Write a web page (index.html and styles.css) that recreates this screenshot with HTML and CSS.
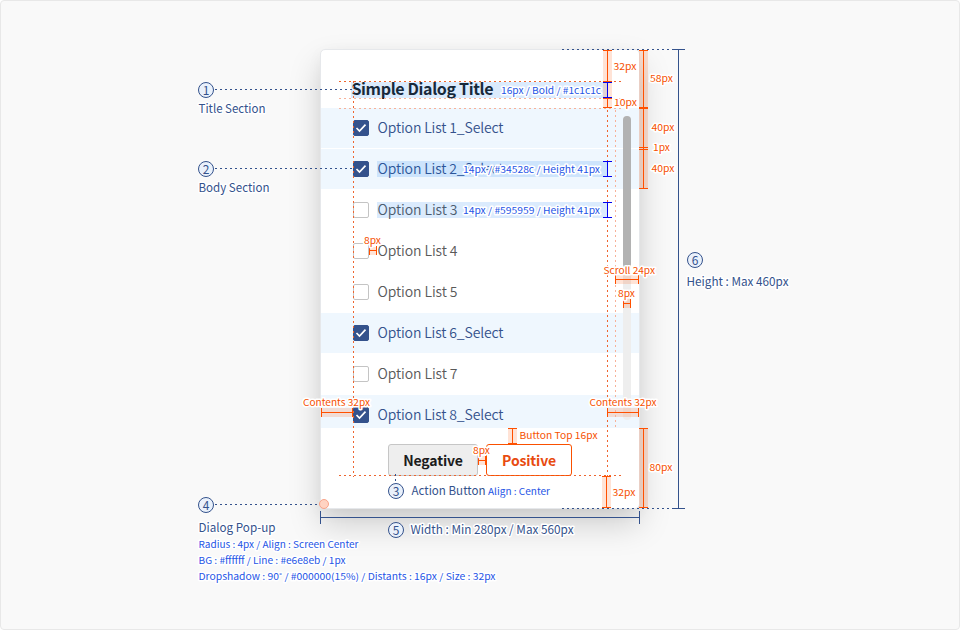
FILE: index.html
```html
<!DOCTYPE html>
<html lang="en">
<head>
<meta charset="utf-8">
<title>Simple Dialog</title>
<link rel="stylesheet" href="styles.css">
</head>
<body>
<main class="board">
  <section class="dialog">
    <h1 class="dialog-title"><svg width="260" height="24"><text x="0.500" y="17" textLength="142">Simple Dialog Title</text></svg></h1>
    <div class="dialog-body">
      <ul class="options">
        <li class="option selected"><i class="check"><svg viewBox="0 0 16 16"><path d="M3.5 8l3 3 6-6.300"/></svg></i><svg class="label"><text x="0.500" y="17" textLength="126">Option List 1_Select</text></svg></li>
        <li class="option selected"><i class="check"><svg viewBox="0 0 16 16"><path d="M3.5 8l3 3 6-6.300"/></svg></i><svg class="label"><text x="0.500" y="17" textLength="126">Option List 2_Select</text></svg></li>
        <li class="option"><i class="check"></i><svg class="label"><text x="0.500" y="17" textLength="80">Option List 3</text></svg></li>
        <li class="option"><i class="check"></i><svg class="label"><text x="0.500" y="17" textLength="80">Option List 4</text></svg></li>
        <li class="option"><i class="check"></i><svg class="label"><text x="0.500" y="17" textLength="80">Option List 5</text></svg></li>
        <li class="option selected"><i class="check"><svg viewBox="0 0 16 16"><path d="M3.5 8l3 3 6-6.300"/></svg></i><svg class="label"><text x="0.500" y="17" textLength="126">Option List 6_Select</text></svg></li>
        <li class="option"><i class="check"></i><svg class="label"><text x="0.500" y="17" textLength="80">Option List 7</text></svg></li>
        <li class="option selected"><i class="check"><svg viewBox="0 0 16 16"><path d="M3.5 8l3 3 6-6.300"/></svg></i><svg class="label"><text x="0.500" y="17" textLength="126">Option List 8_Select</text></svg></li>
      </ul>
      <div class="track"><div class="thumb"></div></div>
    </div>
    <div class="actions">
      <button class="btn negative">Negative</button>
      <button class="btn positive">Positive</button>
    </div>
  </section>

  <svg class="notes" width="960" height="630" viewBox="0 0 960 630">
    <g class="mark">
      <rect x="351" y="82" width="256" height="16"/>
      <rect x="377" y="161" width="230" height="16"/>
      <rect x="377" y="202" width="230" height="16"/>
    </g>
    <g class="tint">
      <rect x="603" y="50" width="9" height="58"/>
      <rect x="639" y="50" width="9" height="139"/>
      <rect x="369" y="247" width="8" height="8"/>
      <rect x="615" y="275" width="24" height="9"/>
      <rect x="623" y="299" width="8" height="9"/>
      <rect x="321" y="408" width="32" height="9"/>
      <rect x="607" y="408" width="32" height="9"/>
      <rect x="508" y="428" width="9" height="16"/>
      <rect x="639" y="428" width="9" height="80"/>
      <rect x="602" y="476" width="9" height="32"/>
      <rect x="478" y="456" width="8" height="9"/>
    </g>
    <g class="guide">
      <path d="M339 81.500H621M353.500 81V477M607.500 110V477M339 475.500H621"/>
      <path class="faint" d="M339 98.500H621M339 108.500H621M615.500 110V428"/>
    </g>
    <g class="lead">
      <path d="M215 89.500H352M215 168.500H352M215 504.500H320M562 49.500H674M562 508.500H674M395.500 474V482"/>
    </g>
    <g class="measure">
      <path d="M603 50.500h9M607.500 50V82M607.500 98V108M603 81.500h9M603 98.500h9M603 107.500h9"/>
      <path d="M639 50.500h9M643.500 50V189M639 107.500h9M639 108.500h9M639 147.500h9M639 149.500h9M639 188.500h9"/>
      <path d="M369.500 246v9M376.500 246v9M369 250.500h8"/>
      <path d="M615.500 275v9M638.500 275v9M615 279.500h24"/>
      <path d="M623.500 299v9M630.500 299v9M623 303.500h8"/>
      <path d="M321.500 408v9M352.500 408v9M321 412.500h32"/>
      <path d="M607.500 408v9M638.500 408v9M607 412.500h32"/>
      <path d="M508 428.500h9M512.500 428v16M508 443.500h9"/>
      <path d="M639 428.500h9M643.500 428v80M639 507.500h9"/>
      <path d="M602 476.500h9M606.500 476v32M602 507.500h9"/>
      <path d="M478.500 456v9M485.500 456v9M478 460.500h8"/>
    </g>
    <g class="blue-measure">
      <path d="M603 82.500h9M607.500 82v16M603 97.500h9M603 161.500h9M607.500 161v16M603 176.500h9M603 202.500h9M607.500 202v16M603 217.500h9"/>
    </g>
    <g class="span"><path d="M672 49.500h13M678.500 49V509M672 508.500h13M320.500 511v13M639.500 511v13M320 517.500h320"/></g>
    <circle class="corner" cx="324" cy="504" r="4.500"/>

    <g class="bullet">
      <circle cx="206" cy="90" r="7.500"/><text x="206" y="94.500">1</text>
      <circle cx="206" cy="169" r="7.500"/><text x="206" y="173.500">2</text>
      <circle cx="396" cy="491" r="7.500"/><text x="396" y="495.500">3</text>
      <circle cx="206" cy="505" r="7.500"/><text x="206" y="509.500">4</text>
      <circle cx="396" cy="530" r="7.500"/><text x="396" y="534.500">5</text>
      <circle cx="695" cy="260" r="7.500"/><text x="695" y="264.500">6</text>
    </g>
    <g class="caption">
      <text x="198.500" y="113" textLength="67" lengthAdjust="spacingAndGlyphs">Title Section</text>
      <text x="198.500" y="192" textLength="71" lengthAdjust="spacingAndGlyphs">Body Section</text>
      <text x="198.500" y="532" textLength="77" lengthAdjust="spacingAndGlyphs">Dialog Pop-up</text>
      <text x="411.500" y="495" textLength="74" lengthAdjust="spacingAndGlyphs">Action Button</text>
      <text x="410.500" y="534" textLength="163" lengthAdjust="spacingAndGlyphs">Width : Min 280px / Max 560px</text>
      <text x="686.500" y="286" textLength="102" lengthAdjust="spacingAndGlyphs">Height : Max 460px</text>
    </g>
    <g class="detail">
      <text x="501" y="94" textLength="100" lengthAdjust="spacingAndGlyphs">16px / Bold / #1c1c1c</text>
      <text x="463" y="173" textLength="137" lengthAdjust="spacingAndGlyphs">14px / #34528c / Height 41px</text>
      <text x="463" y="214" textLength="137" lengthAdjust="spacingAndGlyphs">14px / #595959 / Height 41px</text>
      <text x="488" y="495" textLength="62" lengthAdjust="spacingAndGlyphs">Align : Center</text>
      <text x="198.500" y="548" textLength="160" lengthAdjust="spacingAndGlyphs">Radius : 4px / Align : Screen Center</text>
      <text x="198.500" y="564" textLength="147" lengthAdjust="spacingAndGlyphs">BG : #ffffff / Line : #e6e8eb / 1px</text>
      <text x="198.500" y="580" textLength="297" lengthAdjust="spacingAndGlyphs">Dropshadow : 90˚ / #000000(15%) / Distants : 16px / Size : 32px</text>
    </g>
    <g class="size">
      <text x="613.500" y="70" textLength="23" lengthAdjust="spacingAndGlyphs">32px</text>
      <text x="614" y="106" textLength="23" lengthAdjust="spacingAndGlyphs">10px</text>
      <text x="650" y="82" textLength="23" lengthAdjust="spacingAndGlyphs">58px</text>
      <text x="651.500" y="131" textLength="23" lengthAdjust="spacingAndGlyphs">40px</text>
      <text x="653" y="151" textLength="17" lengthAdjust="spacingAndGlyphs">1px</text>
      <text x="651.500" y="172" textLength="23" lengthAdjust="spacingAndGlyphs">40px</text>
      <text x="364" y="244" textLength="17" lengthAdjust="spacingAndGlyphs">8px</text>
      <text x="603.500" y="274" textLength="51.500" lengthAdjust="spacingAndGlyphs">Scroll 24px</text>
      <text x="618" y="297" textLength="17" lengthAdjust="spacingAndGlyphs">8px</text>
      <text x="303" y="406" textLength="67" lengthAdjust="spacingAndGlyphs">Contents 32px</text>
      <text x="589.500" y="406" textLength="67" lengthAdjust="spacingAndGlyphs">Contents 32px</text>
      <text x="519.500" y="439" textLength="78" lengthAdjust="spacingAndGlyphs">Button Top 16px</text>
      <text x="473" y="454" textLength="17" lengthAdjust="spacingAndGlyphs">8px</text>
      <text x="649.500" y="471" textLength="23" lengthAdjust="spacingAndGlyphs">80px</text>
      <text x="612.500" y="496" textLength="23" lengthAdjust="spacingAndGlyphs">32px</text>
    </g>
  </svg>
</main>
</body>
</html>
```

FILE: styles.css
```css
* { box-sizing: border-box; }
body { margin: 0; font-family: "Noto Sans CJK KR", "Noto Sans", sans-serif; }
.board {
  position: relative;
  width: 960px;
  height: 630px;
  padding-top: 48px;
  background: #f9f9f9;
  border: 1px solid #e8e8e8;
  border-radius: 4px;
}
.dialog {
  display: flex;
  flex-direction: column;
  width: 320px;
  height: 460px;
  margin: 0 auto;
  background: #fff;
  border: 1px solid #e6e8eb;
  border-radius: 5px;
  box-shadow: 0 16px 32px rgba(0, 0, 0, .17), 0 4px 16px rgba(0, 0, 0, .04);
}
.dialog-title { height: 58px; margin: 0; padding: 28px 0 0 30px; font-size: 16px; line-height: 24px; }
.dialog-title svg { display: block; overflow: visible; }
.dialog-title text { fill: #1c1c1c; font-weight: 700; }
.dialog-body { display: grid; grid-template-columns: 1fr 16px; height: 320px; overflow: hidden; }
.options { grid-area: 1 / 1 / 2 / 3; display: flex; flex-direction: column; gap: 1px; margin: 0; padding: 0; list-style: none; }
.option { display: flex; flex: none; align-items: center; gap: 8px; height: 40px; padding-left: 32px; }
.option.selected { background: #eff7fe; }
.check { width: 16px; height: 16px; background: #fff; border: 1px solid #c4c4c4; border-radius: 2px; }
.check svg { display: block; width: 16px; height: 16px; margin: -1px; }
.check path { fill: none; stroke: #fff; stroke-width: 1.700; }
.selected .check { background: #34528c; border-color: #34528c; }
.label { width: 180px; height: 24px; overflow: visible; }
.label text { font-size: 14px; font-weight: 350; fill: #595959; }
.selected .label text { fill: #34528c; }
.track { grid-area: 1 / 2; width: 8px; height: 304px; margin-top: 8px; background: #eee; border-radius: 4px; }
.thumb { height: 152px; background: #b2b2b2; border-radius: 4px; }
.actions { display: flex; justify-content: center; gap: 8px; padding-top: 16px; }
.btn { height: 32px; padding: 0; border-radius: 3px; font: 700 14px/28px "Noto Sans CJK KR", sans-serif; letter-spacing: -.15px; }
.negative { width: 90px; background: #eee; border: 1px solid #c6c6c6; color: #1c1c1c; }
.positive { width: 86px; background: #fff; border: 1px solid #fa5000; color: #e84b10; }
.notes { position: absolute; top: -1px; left: -1px; z-index: 2; }
.notes path { fill: none; stroke-width: 1; }
.mark { fill: #0070f0; fill-opacity: .14; }
.tint { fill: #ff5000; fill-opacity: .16; }
.guide path { stroke: #ee652e; stroke-dasharray: 2 3; }
.guide .faint { stroke: #f7b299; }
.lead path { stroke: #34528c; stroke-dasharray: 2 3; }
.measure path { stroke: #ff5000; }
.blue-measure path { stroke: #0000f0; }
.span path { stroke: #34528c; }
.corner { fill: #ffd3c2; stroke: #f9a489; }
.bullet circle { fill: #eaf1fb; stroke: #34528c; }
.bullet text { fill: #34528c; font-size: 12px; text-anchor: middle; }
.caption text, .detail text, .size text { paint-order: stroke; stroke: #fff; stroke-width: 3px; stroke-linejoin: round; }
.caption text { fill: #34528c; font-size: 12px; }
.detail text { fill: #2454e6; font-size: 9.300px; }
.size text { fill: #f65000; font-size: 9.300px; }
```
